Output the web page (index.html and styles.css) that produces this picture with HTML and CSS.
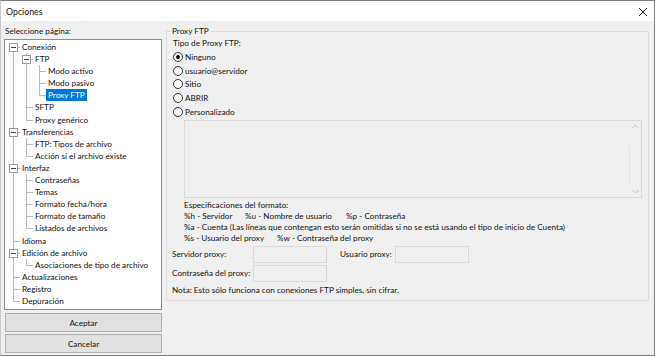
FILE: index.html
```html
<!DOCTYPE html>
<html>
<head>
  <title>Opciones</title>
  <link rel="stylesheet" href="styles.css">
</head>
<body>
  <div class="window">
    <div class="titlebar">
      <span class="title">Opciones</span>
      <svg class="close" width="10" height="10" viewBox="0 0 10 10">
        <path d="M1 1 L9 9 M9 1 L1 9" stroke="#222" stroke-width="1" fill="none"/>
      </svg>
    </div>

    <div class="content">
      <div class="left">
        <div class="caption">Seleccione página:</div>
        <div class="treebox">
          <ul class="tree">
            <li class="first"><span class="exp"></span>Conexión
              <ul>
                <li><span class="exp"></span>FTP
                  <ul>
                    <li>Modo activo</li>
                    <li>Modo pasivo</li>
                    <li class="last"><span class="sel">Proxy FTP</span></li>
                  </ul>
                </li>
                <li>SFTP</li>
                <li class="last">Proxy genérico</li>
              </ul>
            </li>
            <li><span class="exp"></span>Transferencias
              <ul>
                <li>FTP: Tipos de archivo</li>
                <li class="last">Acción si el archivo existe</li>
              </ul>
            </li>
            <li><span class="exp"></span>Interfaz
              <ul>
                <li>Contraseñas</li>
                <li>Temas</li>
                <li>Formato fecha/hora</li>
                <li>Formato de tamaño</li>
                <li class="last">Listados de archivos</li>
              </ul>
            </li>
            <li>Idioma</li>
            <li><span class="exp"></span>Edición de archivo
              <ul>
                <li class="last">Asociaciones de tipo de archivo</li>
              </ul>
            </li>
            <li>Actualizaciones</li>
            <li>Registro</li>
            <li class="last">Depuración</li>
          </ul>
        </div>
        <button class="btn">Aceptar</button>
        <button class="btn btn-second">Cancelar</button>
      </div>

      <fieldset class="group">
        <legend>Proxy FTP</legend>
        <div class="line">Tipo de Proxy FTP:</div>
        <div class="radios">
          <label class="radio"><span class="dot checked"></span>Ninguno</label>
          <label class="radio"><span class="dot"></span>usuario@servidor</label>
          <label class="radio"><span class="dot"></span>Sitio</label>
          <label class="radio"><span class="dot"></span>ABRIR</label>
          <label class="radio"><span class="dot"></span>Personalizado</label>
        </div>
        <div class="textarea">
          <div class="scrollbar">
            <svg width="7" height="5" viewBox="0 0 7 5"><path d="M0.5 4 L3.5 1 L6.5 4" stroke="#c4c4c4" fill="none"/></svg>
            <span class="track"></span>
            <svg width="7" height="5" viewBox="0 0 7 5"><path d="M0.5 1 L3.5 4 L6.5 1" stroke="#c4c4c4" fill="none"/></svg>
          </div>
        </div>
        <div class="specs">
          <div>Especificaciones del formato:</div>
          <div><span class="c1">%h - Servidor</span><span class="c2">%u - Nombre de usuario</span>%p - Contraseña</div>
          <div>%a - Cuenta (Las líneas que contengan esto serán omitidas si no se está usando el tipo de inicio de Cuenta)</div>
          <div><span class="c3">%s - Usuario del proxy</span>%w - Contraseña del proxy</div>
        </div>
        <div class="fields">
          <span>Servidor proxy:</span>
          <span class="input"></span>
          <span class="gap">Usuario proxy:</span>
          <span class="input"></span>
          <span>Contraseña del proxy:</span>
          <span class="input"></span>
        </div>
        <div class="line note">Nota: Esto sólo funciona con conexiones FTP simples, sin cifrar.</div>
      </fieldset>
    </div>
  </div>
</body>
</html>
```

FILE: styles.css
```css
body {
  margin: 0;
  font-family: Lato, "Noto Sans", sans-serif;
  font-size: 8.2px;
  color: #111;
}

.window {
  width: 655px;
  height: 356px;
  box-sizing: border-box;
  border: 1px solid #7c7c7c;
  border-left-color: #c8c8c8;
  background: #f0f0f0;
  display: flex;
  flex-direction: column;
}

.titlebar {
  height: 20px;
  background: #fff;
  display: flex;
  align-items: center;
  justify-content: space-between;
  padding: 0 6px 0 5px;
  flex-shrink: 0;
}

.title {
  font-size: 8.8px;
}

.close {
  margin-top: 1px;
}

.content {
  display: flex;
  gap: 4px;
  padding: 4px 5px 0 3px;
}

.left {
  width: 158px;
  display: flex;
  flex-direction: column;
}

.caption {
  line-height: 12px;
  margin-left: 1px;
  margin-bottom: 2px;
}

.treebox {
  height: 271px;
  box-sizing: border-box;
  background: #fff;
  border: 1px solid #8c8c8c;
  padding-top: 1px;
  overflow: hidden;
}

/* tree view */
.tree,
.tree ul {
  list-style: none;
  margin: 0;
  padding: 0;
}

.tree ul {
  margin-left: -4px;
}

.tree li {
  position: relative;
  padding-left: 17px;
  line-height: 12.1px;
  white-space: nowrap;
}

.tree li::before {
  content: "";
  position: absolute;
  left: 8px;
  top: 6px;
  width: 7px;
  border-top: 1px solid #b9b9b9;
}

.tree li::after {
  content: "";
  position: absolute;
  left: 8px;
  top: 0;
  bottom: 0;
  border-left: 1px solid #b9b9b9;
}

.tree li.first::after {
  top: 6px;
}

.tree li.last::after {
  bottom: auto;
  height: 6px;
}

.exp {
  position: absolute;
  left: 4px;
  top: 2px;
  width: 7px;
  height: 7px;
  border: 1px solid #9a9a9a;
  background: #fff;
  z-index: 1;
}

.exp::after {
  content: "";
  position: absolute;
  left: 1px;
  top: 3px;
  width: 5px;
  border-top: 1px solid #444;
}

.sel {
  background: #0078d7;
  color: #fff;
  padding: 0 2px;
  margin-left: -2px;
  display: inline-block;
}

.btn {
  height: 19px;
  margin: 3px 0 0 1px;
  width: 157px;
  font-family: inherit;
  font-size: 8.2px;
  color: #111;
  background: #e1e1e1;
  border: 1px solid #adadad;
  padding: 0;
}

.btn-second {
  margin-top: 2px;
}

/* right group box */
.group {
  flex: 1;
  height: 276px;
  box-sizing: border-box;
  margin: 0;
  border: 1px solid #dcdcdc;
  padding: 0 6px;
}

.group legend {
  padding: 0 1px;
  margin-left: -2px;
  line-height: 12px;
}

.line {
  line-height: 12px;
}

.radios {
  margin-top: 1px;
}

.radio {
  display: flex;
  align-items: center;
  height: 13.75px;
}

.dot {
  width: 8px;
  height: 8px;
  border: 1px solid #333;
  border-radius: 50%;
  background: #fff;
  margin-right: 2px;
  position: relative;
}

.dot.checked::after {
  content: "";
  position: absolute;
  left: 2px;
  top: 2px;
  width: 4px;
  height: 4px;
  border-radius: 50%;
  background: #000;
}

.textarea {
  margin: 1px 0 0 11px;
  height: 78px;
  box-sizing: border-box;
  border: 1px solid #dadada;
  display: flex;
  justify-content: flex-end;
}

.scrollbar {
  width: 12px;
  display: flex;
  flex-direction: column;
  align-items: center;
  justify-content: space-between;
  padding: 3px 0;
}

.track {
  flex: 1;
  margin: 17px 0 4px;
  border-left: 1px solid #e3e3e3;
  align-self: flex-start;
}

.specs {
  margin: 2px 0 0 11px;
  line-height: 11px;
  white-space: nowrap;
}

.c1 {
  display: inline-block;
  width: 61px;
}

.c2 {
  display: inline-block;
  width: 101px;
}

.c3 {
  display: inline-block;
  width: 93px;
}

.fields {
  display: grid;
  grid-template-columns: 81px 74px 68px 74px;
  row-gap: 2px;
  align-items: center;
  margin-top: 2px;
  margin-left: -1px;
  white-space: nowrap;
}

.fields .gap {
  padding-left: 13px;
}

.fields .input {
  height: 17px;
  box-sizing: border-box;
  border: 1px solid #d9d9d9;
  background: #f0f0f0;
}

.note {
  margin-top: 2px;
  margin-left: -1px;
}
```
